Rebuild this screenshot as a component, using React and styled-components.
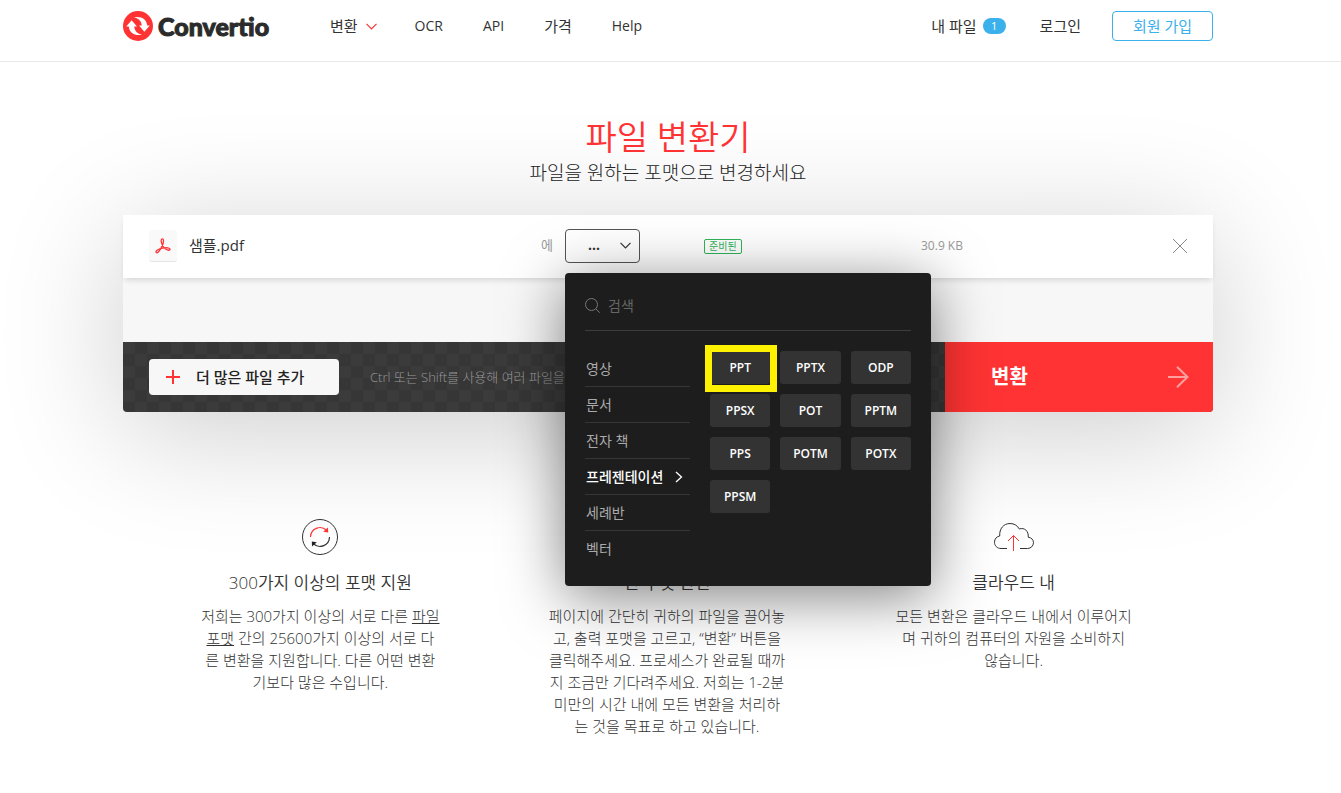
import React from "react";
import styled, { createGlobalStyle, css } from "styled-components";

const GlobalStyle = createGlobalStyle`
  *, *::before, *::after { box-sizing: border-box; }
  body {
    margin: 0;
    background: #fff;
    color: #333;
    font: 400 15px/22px "Open Sans", "Noto Sans CJK KR", sans-serif;
    overflow-x: hidden;
  }
  button, input, select { font: inherit; color: inherit; margin: 0; }
  button { cursor: pointer; }
  a { color: inherit; text-decoration: none; }
  h1, h2, p, ul { margin: 0; padding: 0; }
  ul { list-style: none; }
`;

const Header = styled.header`
  position: relative;
  z-index: 1;
  background: #fff;
  border-bottom: 1px solid #e8e8e8;
  padding: 11px 5px 20px 0;
`;

const Container = styled.div`
  width: 100%;
  max-width: 1090px;
  margin: 0 auto;
`;

const HeaderRow = styled(Container)`
  display: flex;
  align-items: center;
`;

const Logo = styled.a`
  display: flex;
  align-items: center;
  gap: 5px;
  width: 207px;
  height: 30px;
  color: #2b2b2b;
  font: 900 25px/30px Lato, sans-serif;
  -webkit-text-stroke: 1px #2b2b2b;
`;

const Nav = styled.nav`
  display: flex;
  gap: 40px;
  flex: 1;
`;

const navItem = css`
  display: flex;
  align-items: center;
  font-size: ${(p) => (p.$latin ? 14 : 15)}px;
  line-height: 30px;
`;

const NavLink = styled.a`
  ${navItem}
`;

const NavButton = styled.button`
  ${navItem}
  gap: 8px;
  margin-right: -2px;
  padding: 0;
  border: 0;
  background: none;
`;

const Account = styled.div`
  display: flex;
  align-items: center;
  gap: 31px;
`;

const Badge = styled.span`
  width: 23px;
  margin: 0 3px 0 6px;
  border-radius: 8px;
  background: #3ab1ea;
  color: #fff;
  font-size: 11px;
  line-height: 16px;
  text-align: center;
`;

const SignUp = styled.a`
  width: 101px;
  border: 1px solid #3ab1ea;
  border-radius: 4px;
  color: #3ab1ea;
  line-height: 28px;
  text-align: center;
`;

const Main = styled.main`
  padding: 52px 5px 56px 0;
`;

const Intro = styled.div`
  text-align: center;
`;

const Title = styled.h1`
  color: #ff3333;
  font-size: 34px;
  font-weight: 350;
  line-height: 46px;
`;

const Subtitle = styled.p`
  color: #222;
  font-size: 19px;
  font-weight: 300;
  line-height: 26px;
`;

const Converter = styled(Container)`
  margin-top: 29px;
  border-radius: 0 0 4px 4px;
  background: #f7f7f7;
  box-shadow: 0 20px 125px rgba(0, 0, 0, 0.2);
`;

const FileRow = styled.div`
  display: flex;
  align-items: center;
  height: 63px;
  padding: 0 26px 1px;
  background: #fff;
  box-shadow: 0 4px 6px -2px rgba(0, 0, 0, 0.14);
`;

const FileIcon = styled.span`
  display: grid;
  place-items: center;
  width: 28px;
  height: 32px;
  margin-right: 12px;
  border-radius: 3px;
  border-bottom: 1px solid #e4e4e4;
  background: #f9f9f9;
`;

const FileName = styled.span`
  width: 352px;
  padding-bottom: 3px;
`;

const FormatLabel = styled.label`
  width: 24px;
  padding-bottom: 2px;
  color: #999;
  font-size: 13px;
`;

const FormatPicker = styled.div`
  position: relative;
  width: 75px;
  margin-right: 64px;
`;

const FormatSelect = styled.select`
  display: block;
  appearance: none;
  width: 100%;
  height: 34px;
  padding: 0 20px 2px 22px;
  border: 1px solid #555;
  border-radius: 4px;
  background: #fff;
  font-size: 14px;
  font-weight: 700;
`;

const SelectArrow = styled.span`
  display: flex;
  position: absolute;
  top: 13px;
  right: 9px;
  pointer-events: none;
`;

const StatusCell = styled.div`
  width: 217px;
  display: flex;
`;

const Status = styled.span`
  padding: 0 4px;
  border: 1px solid #2fb45a;
  border-radius: 2px;
  color: #2fb45a;
  font-size: 10px;
  line-height: 13px;
`;

const FileSize = styled.span`
  flex: 1;
  color: #999;
  font-size: 12px;
`;

const IconButton = styled.button`
  display: grid;
  padding: 0;
  border: 0;
  background: none;
`;

const ActionBar = styled.div`
  display: flex;
  height: 70px;
  margin-top: 64px;
  border-radius: 0 0 4px 4px;
  overflow: hidden;
  background: repeating-conic-gradient(#363636 0 25%, #3b3b3b 0 50%) 0 0 / 24px 24px;
`;

const AddArea = styled.div`
  display: flex;
  align-items: center;
  gap: 31px;
  flex: 1;
  padding-left: 26px;
`;

const AddButton = styled.button`
  display: flex;
  align-items: center;
  gap: 16px;
  width: 190px;
  height: 36px;
  padding: 0 17px;
  border: 0;
  border-radius: 4px;
  background: #f7f7f7;
  color: #222;
  font-weight: 500;
`;

const Hint = styled.span`
  color: #999;
  font-size: 13px;
  font-weight: 300;
`;

const ConvertButton = styled.button`
  display: flex;
  align-items: center;
  justify-content: space-between;
  width: 268px;
  padding: 0 24px 0 46px;
  border: 0;
  background: #ff3333;
  color: #fff;
  font-size: 20px;
  font-weight: 700;
`;

const Dropdown = styled.div`
  position: absolute;
  z-index: 2;
  top: 44px;
  left: 0;
  width: 366px;
  padding: 20px;
  border-radius: 4px;
  background: #1d1d1d;
  box-shadow: 0 10px 60px rgba(0, 0, 0, 0.5);
`;

const SearchField = styled.label`
  display: flex;
  align-items: center;
  gap: 8px;
  padding-bottom: 12px;
  border-bottom: 1px solid #3d3d3d;
  color: #666;
`;

const SearchInput = styled.input`
  flex: 1;
  min-width: 0;
  height: 25px;
  padding: 0;
  border: 0;
  outline: 0;
  background: none;
  font-size: 14px;
  &::placeholder { color: #666; opacity: 1; }
`;

const Choices = styled.div`
  display: grid;
  grid-template-columns: 105px 1fr;
  column-gap: 20px;
  padding-top: 20px;
`;

const CategoryItem = styled.li`
  & + & { border-top: 1px solid #363636; }
`;

const Category = styled.button`
  display: flex;
  align-items: center;
  justify-content: space-between;
  width: 100%;
  height: 35px;
  padding: 0 7px 0 1px;
  border: 0;
  background: none;
  color: ${(p) => (p.$active ? "#fff" : "#aaa")};
  font-size: 14px;
  font-weight: ${(p) => (p.$active ? 500 : 400)};
  white-space: nowrap;
`;

const Formats = styled.ul`
  display: grid;
  grid-template-columns: repeat(3, 1fr);
  gap: 10px;
  align-content: start;
`;

const FormatItem = styled.li`
  position: relative;
  ${(p) =>
    p.$marked &&
    css`
      &::after {
        content: "";
        position: absolute;
        inset: -6px -7px -8px -5px;
        border: 7px solid #fff200;
        pointer-events: none;
      }
    `}
`;

const FormatButton = styled.button`
  display: block;
  width: 100%;
  height: 33px;
  padding: 1px 0 0;
  border: 0;
  border-radius: 3px;
  background: #333;
  color: #fff;
  font-size: 12px;
  font-weight: 600;
`;

const Features = styled(Container)`
  display: grid;
  grid-template-columns: repeat(3, 1fr);
  padding: 107px 26px 0 24px;
`;

const Feature = styled.section`
  display: flex;
  flex-direction: column;
  align-items: center;
  text-align: center;
`;

const FeatureIcon = styled.div`
  display: grid;
  place-items: center;
  height: 36px;
`;

const FeatureTitle = styled.h2`
  margin-top: 16px;
  font-size: 17px;
  font-weight: 350;
  line-height: 24px;
`;

const FeatureText = styled.p`
  width: 240px;
  margin-top: 10px;
  font-weight: 300;
`;

const TextLink = styled.a`
  text-decoration: underline;
`;

const LogoMark = () => (
  <svg width="30" height="30" viewBox="0 0 30 30" aria-hidden="true">
    <circle cx="15" cy="15" r="15" fill="#ff3333" />
    <path fill="#fff" d="M3.200 15.500 8.600 9.300l5.400 6.200h-2.800c.4 4.400 3 7.200 7.800 8.300C11.500 25.200 6.200 21.600 5.800 15.500z" />
    <path fill="#fff" d="M26.800 14.500l-5.400 6.200-5.400-6.200h2.800c-.4-4.400-3-7.200-7.800-8.300 7.500-1.400 12.800 2.200 13.200 8.300z" />
  </svg>
);

const Chevron = ({ color, dir = "down" }) =>
  dir === "down" ? (
    <svg width="11" height="7" viewBox="0 0 11 7" fill="none" stroke={color} aria-hidden="true">
      <path d="M.5.8 5.500 5.800 10.500.8" strokeWidth="1.200" />
    </svg>
  ) : (
    <svg width="8" height="12" viewBox="0 0 8 12" fill="none" stroke={color} aria-hidden="true">
      <path d="m1 1 5.500 5L1 11" strokeWidth="1.300" />
    </svg>
  );

const categories = ["영상", "문서", "전자 책", "프레젠테이션", "세례반", "벡터"];
const formats = ["PPT", "PPTX", "ODP", "PPSX", "POT", "PPTM", "PPS", "POTM", "POTX", "PPSM"];

const FormatMenu = () => (
  <Dropdown>
    <SearchField>
      <svg width="15" height="15" viewBox="0 0 15 15" fill="none" stroke="#777" aria-hidden="true">
        <circle cx="6.500" cy="6.500" r="6" />
        <path d="m11 11 3.700 3.700" />
      </svg>
      <SearchInput type="text" placeholder="검색" aria-label="검색" />
    </SearchField>
    <Choices>
      <ul>
        {categories.map((name) => {
          const active = name === "프레젠테이션";
          return (
            <CategoryItem key={name}>
              <Category type="button" $active={active}>
                {name}
                {active && <Chevron color="#fff" dir="right" />}
              </Category>
            </CategoryItem>
          );
        })}
      </ul>
      <Formats>
        {formats.map((name) => (
          <FormatItem key={name} $marked={name === "PPT"}>
            <FormatButton type="button">{name}</FormatButton>
          </FormatItem>
        ))}
      </Formats>
    </Choices>
  </Dropdown>
);

export default function App() {
  return (
    <>
      <GlobalStyle />
      <Header>
        <HeaderRow>
          <Logo href="#">
            <LogoMark />
            Convertio
          </Logo>
          <Nav>
            <NavButton type="button">
              변환
              <Chevron color="#ff3333" />
            </NavButton>
            <NavLink href="#" $latin>OCR</NavLink>
            <NavLink href="#" $latin>API</NavLink>
            <NavLink href="#">가격</NavLink>
            <NavLink href="#" $latin>Help</NavLink>
          </Nav>
          <Account>
            <NavLink href="#">
              내 파일<Badge>1</Badge>
            </NavLink>
            <NavLink href="#">로그인</NavLink>
            <SignUp href="#">회원 가입</SignUp>
          </Account>
        </HeaderRow>
      </Header>
      <Main>
        <Intro>
          <Title>파일 변환기</Title>
          <Subtitle>파일을 원하는 포맷으로 변경하세요</Subtitle>
        </Intro>
        <Converter>
          <FileRow>
            <FileIcon>
              <svg width="16" height="16" viewBox="0 0 16 16" fill="none" stroke="#ff3333" strokeWidth="1.300" aria-hidden="true">
                <path d="M1.300 14.600c-1.300-1.300 1.500-3.500 6-4.400 4.300-.9 7.700-.4 7.800 1 .1 1.600-2.700 1.300-4.900-.4C7.600 8.700 6 4.300 6.200 2.300c.2-1.800 2.200-1.900 2.300 0 .1 2-1.200 5.700-3.200 9-1.500 2.500-3.100 4.200-4 3.300z" />
              </svg>
            </FileIcon>
            <FileName>샘플.pdf</FileName>
            <FormatLabel htmlFor="format">에</FormatLabel>
            <FormatPicker>
              <FormatSelect id="format" defaultValue="">
                <option value="">...</option>
              </FormatSelect>
              <SelectArrow>
                <Chevron color="#333" />
              </SelectArrow>
              <FormatMenu />
            </FormatPicker>
            <StatusCell>
              <Status>준비된</Status>
            </StatusCell>
            <FileSize>30.9 KB</FileSize>
            <IconButton type="button" aria-label="삭제">
              <svg width="14" height="14" viewBox="0 0 14 14" stroke="#888" aria-hidden="true">
                <path d="m0 0 14 14M14 0 0 14" />
              </svg>
            </IconButton>
          </FileRow>
          <ActionBar>
            <AddArea>
              <AddButton type="button">
                <svg width="14" height="14" viewBox="0 0 14 14" stroke="#ff3333" strokeWidth="2" aria-hidden="true">
                  <path d="M7 0v14M0 7h14" />
                </svg>
                더 많은 파일 추가
              </AddButton>
              <Hint>Ctrl 또는 Shift를 사용해 여러 파일을 추가</Hint>
            </AddArea>
            <ConvertButton type="button">
              변환
              <svg width="21" height="22" viewBox="0 0 21 22" fill="none" stroke="#ff9f9f" strokeWidth="2" aria-hidden="true">
                <path d="M0 11h19.500M9 .8 19.500 11 9 21.200" />
              </svg>
            </ConvertButton>
          </ActionBar>
        </Converter>
        <Features>
          <Feature>
            <FeatureIcon>
              <svg width="36" height="36" viewBox="0 0 36 36" fill="none" stroke="#333" aria-hidden="true">
                <circle cx="18" cy="18" r="17.500" />
                <path d="M8.500 18a9.500 9.500 0 0 1 16-6.800" stroke="#ff3333" strokeWidth="1.200" />
                <path d="m26 8.500.2 5-5-.8z" fill="#ff3333" stroke="none" />
                <path d="M27.500 18a9.500 9.500 0 0 1-16 6.800" strokeWidth="1.200" />
                <path d="m10 27.500-.2-5 5 .8z" fill="#222" stroke="none" />
              </svg>
            </FeatureIcon>
            <FeatureTitle>300가지 이상의 포맷 지원</FeatureTitle>
            <FeatureText>
              저희는 300가지 이상의 서로 다른 <TextLink href="#">파일 포맷</TextLink> 간의 25600가지
              이상의 서로 다른 변환을 지원합니다. 다른 어떤 변환기보다 많은 수입니다.
            </FeatureText>
          </Feature>
          <Feature>
            <FeatureIcon />
            <FeatureTitle>신속 및 간편</FeatureTitle>
            <FeatureText>
              페이지에 간단히 귀하의 파일을 끌어놓고, 출력 포맷을 고르고, “변환” 버튼을 클릭해주세요.
              프로세스가 완료될 때까지 조금만 기다려주세요. 저희는 1-2분 미만의 시간 내에 모든 변환을
              처리하는 것을 목표로 하고 있습니다.
            </FeatureText>
          </Feature>
          <Feature>
            <FeatureIcon>
              <svg width="40" height="28" viewBox="0 0 40 28" fill="none" stroke="#333" aria-hidden="true">
                <path d="M13 25.500H7C3.300 25.500.5 22.800.5 19.200c0-3.300 2-5.600 5.200-6.200C5.200 5.800 9.600.5 16 .5c4.300 0 7.600 2.200 9.300 5.500 5-1.800 9.600 2 8.900 8.200 3.200.3 5.300 2.700 5.300 5.400 0 3.200-2.600 5.900-5.900 5.900H26" />
                <path d="M19.500 28V12.500M14 18l5.500-5.500L25 18" stroke="#ff3333" />
              </svg>
            </FeatureIcon>
            <FeatureTitle>클라우드 내</FeatureTitle>
            <FeatureText>
              모든 변환은 클라우드 내에서 이루어지며 귀하의 컴퓨터의 자원을 소비하지 않습니다.
            </FeatureText>
          </Feature>
        </Features>
      </Main>
    </>
  );
}
